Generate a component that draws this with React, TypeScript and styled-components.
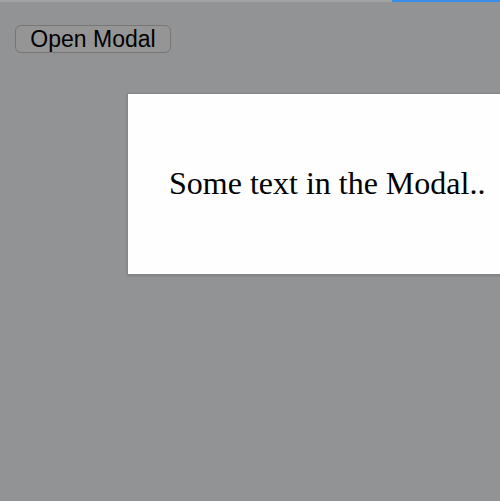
import React from 'react';
import styled, { createGlobalStyle } from 'styled-components';

const GlobalStyle = createGlobalStyle`
    html, body {
        margin:0;
        padding:0;
        background:#929394;
        overflow:hidden;
    }
`

const Page = styled.div`
    position:relative;
    width:500px;
    height:501px;
    background:#929394;
    overflow:hidden;
`

const TopStrip = styled.div`
    display:flex;
    height:2px;
    .rest {
        flex:1;
        background:#a2a2a3;
    }
    .progress {
        width:108px;
        background:#3b8ee8;
    }
`

const OpenButton = styled.button`
    display:block;
    margin:23px 0 0 15px;
    width:156px;
    height:28px;
    padding:0;
    border:1px solid #767677;
    border-radius:6px;
    background:#959596;
    color:#000;
    font-family:"Liberation Sans", Arial, sans-serif;
    font-size:23px;
    line-height:26px;
    text-align:center;
`

const Overlay = styled.div`
    position:absolute;
    inset:0;
    padding:93px 0 0 127px;
`

const ModalBox = styled.div`
    display:flex;
    align-items:center;
    box-sizing:border-box;
    width:420px;
    height:182px;
    padding:0 0 2px 41px;
    background:#fefefe;
    border:1px solid #858586;
    box-shadow:0 1px 2px rgba(0,0,0,0.15);
    font-family:"Liberation Serif", "Times New Roman", serif;
    font-size:32px;
    color:#000;
    white-space:nowrap;
`

const App = () => {
    return (
        <Page>
            <GlobalStyle />
            <TopStrip>
                <div className="rest" />
                <div className="progress" />
            </TopStrip>
            <OpenButton>Open Modal</OpenButton>
            <Overlay>
                <ModalBox>Some text in the Modal..</ModalBox>
            </Overlay>
        </Page>
    )
}

export default App;
